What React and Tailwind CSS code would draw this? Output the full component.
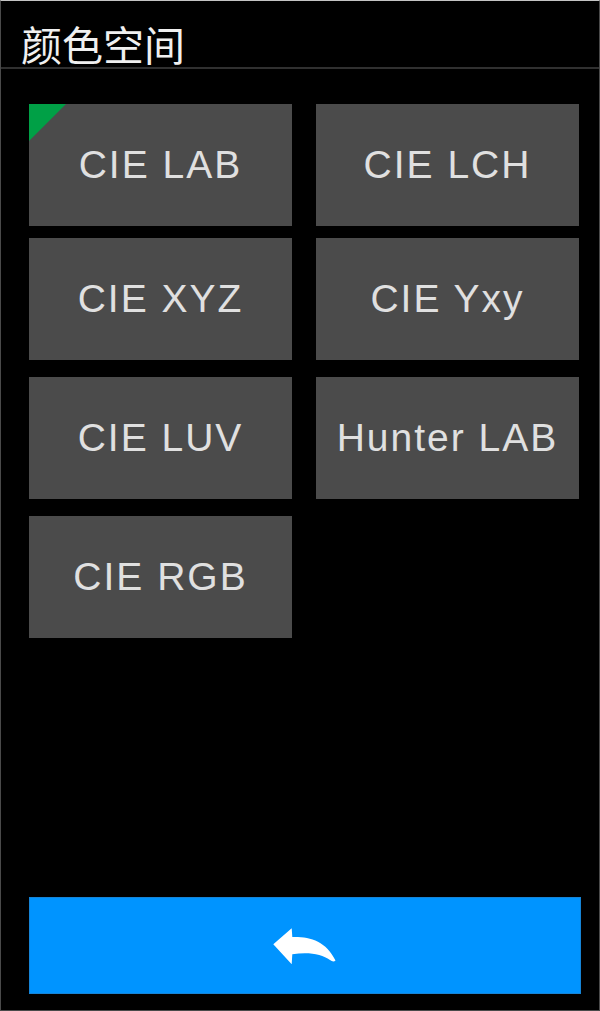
import React from 'react';

// colour spaces offered on this screen
const spaces = [
  ['CIE LAB', 'CIE LCH'],
  ['CIE XYZ', 'CIE Yxy'],
  ['CIE LUV', 'Hunter LAB'],
  ['CIE RGB', null],
];

const rowGaps = ['mt-[35px]', 'mt-[12px]', 'mt-[17px]', 'mt-[17px]'];

const BackArrow = () => (
  <svg width="90" height="70" viewBox="0 0 90 70" className="block">
    <path
      d="M13.3 33.3 L31.7 17.3 L32.3 26 C50 25.5 66 30 75.5 49.5 C74 51 72 50.5 70 49 C62 43 48 40.5 32.3 43.3 L31.7 53.3 Z"
      fill="#ffffff"
    />
  </svg>
);

const SpaceButton = ({ label, selected }) => (
  <button className="relative w-[263px] h-[122px] bg-[#4b4b4b] flex items-center justify-center text-[39px] tracking-[2px] text-[#e0e0e0] font-['Liberation_Sans',Arial,sans-serif]">
    {selected && (
      <span className="absolute left-0 top-0 w-0 h-0 border-t-[37px] border-t-[#00a046] border-r-[37px] border-r-transparent" />
    )}
    {label}
  </button>
);

export default function App() {
  return (
    <div className="w-[600px] h-[1011px] bg-black flex flex-col border-t border-t-[#c4c4c4] border-x border-x-[#4a4a4a] border-b border-b-[#4a4a4a]">
      {/* title bar */}
      <div className="h-[68px] flex items-start border-b-2 border-b-[#303030]">
        <h1 className="mt-[22px] ml-[20px] text-[41px] leading-none text-[#f0f0f0] font-['Noto_Sans_CJK_SC',sans-serif]">
          颜色空间
        </h1>
      </div>

      {/* colour space grid */}
      <div className="flex flex-col ml-[28px]">
        {spaces.map((row, i) => (
          <div key={i} className={`flex gap-x-[24px] ${rowGaps[i]}`}>
            {row.map((label, j) =>
              label ? (
                <SpaceButton key={j} label={label} selected={i === 0 && j === 0} />
              ) : null
            )}
          </div>
        ))}
      </div>

      {/* back */}
      <button className="mt-auto mb-[16px] ml-[28px] w-[552px] h-[97px] bg-[#0094ff] border border-[#1684d6] flex items-center justify-center">
        <BackArrow />
      </button>
    </div>
  );
}
